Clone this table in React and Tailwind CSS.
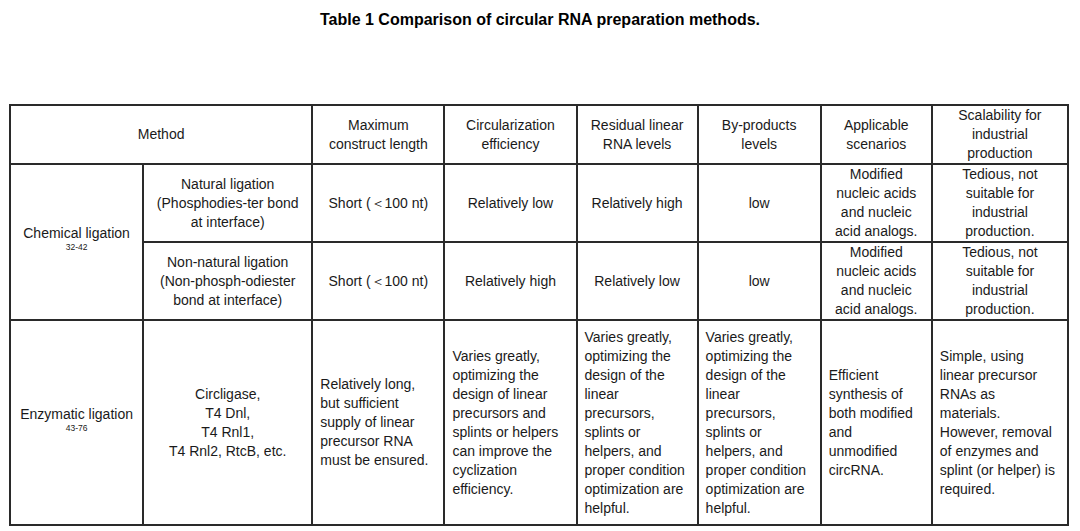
import React from 'react';

const Lines = ({ lines }) => (
  <>
    {lines.map((l, i) => (
      <div key={i} className="whitespace-nowrap">{l}</div>
    ))}
  </>
);

const cell = 'border-2 border-[#2a2a2a] align-middle p-0';
const center = `${cell} text-center`;
const left = `${cell} text-left pl-[7px]`;

export default function App() {
  return (
    <div className="w-[1080px] h-[531px] bg-white text-[#1a1a1a] font-['Liberation_Sans',Arial,sans-serif]">
      <h1 className="pt-[11px] text-center text-[16px] leading-[18px] font-bold text-black">
        Table 1 Comparison of circular RNA preparation methods.
      </h1>

      <table className="mt-[75px] ml-[9px] w-[1060px] table-fixed border-collapse text-[14px] leading-[19px]">
        <colgroup>
          <col className="w-[133px]" />
          <col className="w-[169px]" />
          <col className="w-[132px]" />
          <col className="w-[132px]" />
          <col className="w-[121px]" />
          <col className="w-[123px]" />
          <col className="w-[111px]" />
          <col className="w-[136px]" />
        </colgroup>
        <tbody>
          {/* header */}
          <tr className="h-[59px]">
            <td colSpan={2} className={center}>Method</td>
            <td className={center}><Lines lines={['Maximum', 'construct length']} /></td>
            <td className={center}><Lines lines={['Circularization', 'efficiency']} /></td>
            <td className={center}><Lines lines={['Residual linear', 'RNA levels']} /></td>
            <td className={center}><Lines lines={['By-products', 'levels']} /></td>
            <td className={center}><Lines lines={['Applicable', 'scenarios']} /></td>
            <td className={center}><Lines lines={['Scalability for', 'industrial', 'production']} /></td>
          </tr>

          {/* chemical ligation */}
          <tr className="h-[77px]">
            <td rowSpan={2} className={`${center} pb-[8px]`}>
              <div>Chemical ligation</div>
              <div className="text-[8.5px] leading-[9px]">32-42</div>
            </td>
            <td className={center}>
              <Lines lines={['Natural ligation', '(Phosphodies-ter bond', 'at interface)']} />
            </td>
            <td className={center}>Short (＜100 nt)</td>
            <td className={center}>Relatively low</td>
            <td className={center}>Relatively high</td>
            <td className={center}>low</td>
            <td className={center}>
              <Lines lines={['Modified', 'nucleic acids', 'and nucleic', 'acid analogs.']} />
            </td>
            <td className={center}>
              <Lines lines={['Tedious, not', 'suitable for', 'industrial', 'production.']} />
            </td>
          </tr>
          <tr className="h-[77px]">
            <td className={center}>
              <Lines lines={['Non-natural ligation', '(Non-phosph-odiester', 'bond at interface)']} />
            </td>
            <td className={center}>Short (＜100 nt)</td>
            <td className={center}>Relatively high</td>
            <td className={center}>Relatively low</td>
            <td className={center}>low</td>
            <td className={center}>
              <Lines lines={['Modified', 'nucleic acids', 'and nucleic', 'acid analogs.']} />
            </td>
            <td className={center}>
              <Lines lines={['Tedious, not', 'suitable for', 'industrial', 'production.']} />
            </td>
          </tr>

          {/* enzymatic ligation */}
          <tr className="h-[205px]">
            <td className={`${center} pb-[8px]`}>
              <div>Enzymatic ligation</div>
              <div className="text-[8.5px] leading-[9px]">43-76</div>
            </td>
            <td className={center}>
              <Lines lines={['Circligase,', 'T4 Dnl,', 'T4 Rnl1,', 'T4 Rnl2, RtcB, etc.']} />
            </td>
            <td className={left}>
              <Lines
                lines={['Relatively long,', 'but sufficient', 'supply of linear', 'precursor RNA', 'must be ensured.']}
              />
            </td>
            <td className={left}>
              <Lines
                lines={[
                  'Varies greatly,',
                  'optimizing the',
                  'design of linear',
                  'precursors and',
                  'splints or helpers',
                  'can improve the',
                  'cyclization',
                  'efficiency.',
                ]}
              />
            </td>
            <td className={left}>
              <Lines
                lines={[
                  'Varies greatly,',
                  'optimizing the',
                  'design of the',
                  'linear',
                  'precursors,',
                  'splints or',
                  'helpers, and',
                  'proper condition',
                  'optimization are',
                  'helpful.',
                ]}
              />
            </td>
            <td className={left}>
              <Lines
                lines={[
                  'Varies greatly,',
                  'optimizing the',
                  'design of the',
                  'linear',
                  'precursors,',
                  'splints or',
                  'helpers, and',
                  'proper condition',
                  'optimization are',
                  'helpful.',
                ]}
              />
            </td>
            <td className={left}>
              <Lines
                lines={['Efficient', 'synthesis of', 'both modified', 'and', 'unmodified', 'circRNA.']}
              />
            </td>
            <td className={left}>
              <Lines
                lines={[
                  'Simple, using',
                  'linear precursor',
                  'RNAs as',
                  'materials.',
                  'However, removal',
                  'of enzymes and',
                  'splint (or helper) is',
                  'required.',
                ]}
              />
            </td>
          </tr>
        </tbody>
      </table>
    </div>
  );
}
